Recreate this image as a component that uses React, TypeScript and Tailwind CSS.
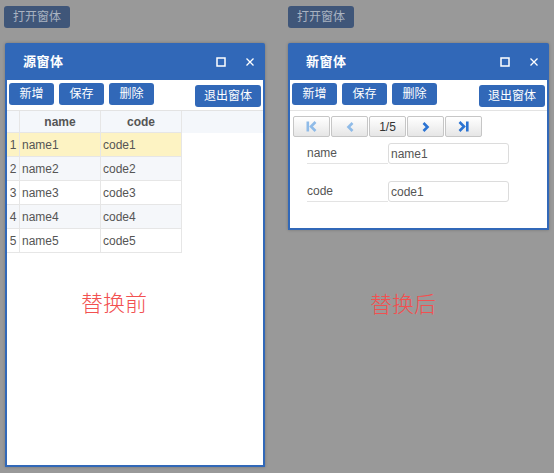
import type { ReactNode } from 'react'

const rows = [1, 2, 3, 4, 5]

function ToolBtn({ children, w = 'w-[45px]' }: { children: ReactNode; w?: string }) {
  return (
    <button className={`${w} h-[22px] rounded-[3px] bg-[#3168b8] text-white text-[12px] leading-[22px] text-center`}>
      {children}
    </button>
  )
}

function Toolbar() {
  return (
    <div className="h-[31px] flex items-start pt-[3px] px-[2px] border-b border-[#e3e3e3]">
      <div className="flex gap-[5px]">
        <ToolBtn>新增</ToolBtn>
        <ToolBtn>保存</ToolBtn>
        <ToolBtn>删除</ToolBtn>
      </div>
      <div className="ml-auto">
        <ToolBtn w="w-[66px]">退出窗体</ToolBtn>
      </div>
    </div>
  )
}

function WinHeader({ title }: { title: string }) {
  return (
    <div className="h-[37px] flex items-center pl-[16px] pr-[8px] text-white">
      <span className="text-[13px] font-bold tracking-[0.5px]">{title}</span>
      <div className="ml-auto flex items-center gap-[19px]">
        <svg width="10" height="10" viewBox="0 0 10 10">
          <rect x="1" y="1" width="8" height="8" fill="none" stroke="white" strokeWidth="1.5" />
        </svg>
        <svg width="10" height="10" viewBox="0 0 10 10">
          <path d="M1.5 1.5 L8.5 8.5 M8.5 1.5 L1.5 8.5" stroke="white" strokeWidth="1.3" />
        </svg>
      </div>
    </div>
  )
}

function OpenBtn() {
  return (
    <button className="w-[66px] h-[22px] rounded-[3px] bg-[#3f5679] text-[#aab3c1] text-[12px] leading-[22px] text-center">
      打开窗体
    </button>
  )
}

function PagerBtn({ children }: { children: ReactNode }) {
  return (
    <div className="w-[37px] h-[21px] rounded-[2px] border border-[#c6c6c6] bg-gradient-to-b from-[#ffffff] to-[#e6e6e6] flex items-center justify-center text-[12px] text-[#333]">
      {children}
    </div>
  )
}

export default function App() {
  return (
    <div
      className="w-[554px] h-[473px] bg-[#999999] flex overflow-hidden"
      style={{ fontFamily: '"Liberation Sans", Arial, "Noto Sans CJK SC", sans-serif' }}
    >
      {/* left column */}
      <div className="w-[288px] pl-[4px] pt-[6px] flex flex-col">
        <OpenBtn />
        <div className="mt-[15px] ml-[1px] w-[260px] h-[424px] bg-[#3168b8] rounded-t-[2px] flex flex-col px-[2px] pb-[2px] shadow-[0_0_3px_rgba(0,0,0,0.25)]">
          <WinHeader title="源窗体" />
          <div className="flex-1 bg-white flex flex-col">
            <Toolbar />
            <div className="grid grid-cols-[13px_81px_81px_1fr] text-[12px] text-[#555]">
              <div className="h-[22px] bg-[#f4f7fb] border-r border-b border-[#e6e6e6]" />
              <div className="h-[22px] bg-[#f4f7fb] border-r border-b border-[#e6e6e6] font-bold flex items-center justify-center">name</div>
              <div className="h-[22px] bg-[#f4f7fb] border-r border-b border-[#e6e6e6] font-bold flex items-center justify-center">code</div>
              <div className="h-[22px] bg-[#f4f7fb]" />
              {rows.map((r) => {
                const bg = r === 1 ? 'bg-[#fdf3c3]' : r % 2 === 0 ? 'bg-[#f5f7fa]' : 'bg-white'
                return [
                  <div key={`n${r}`} className={`h-[24px] border-r border-b border-[#e6e6e6] flex items-center justify-center ${bg}`}>{r}</div>,
                  <div key={`a${r}`} className={`h-[24px] border-r border-b border-[#e6e6e6] flex items-center pl-[2px] ${bg}`}>name{r}</div>,
                  <div key={`c${r}`} className={`h-[24px] border-r border-b border-[#e6e6e6] flex items-center pl-[2px] ${bg}`}>code{r}</div>,
                  <div key={`f${r}`} className="h-[24px]" />,
                ]
              })}
            </div>
            <div
              className="mt-[36px] ml-[74px] text-[22px] leading-[24px] text-[#f25050]"
              style={{ fontFamily: '"Noto Sans CJK SC", sans-serif', fontWeight: 300 }}
            >
              替换前
            </div>
          </div>
        </div>
      </div>

      {/* right column */}
      <div className="flex-1 pt-[6px] flex flex-col">
        <OpenBtn />
        <div className="mt-[15px] w-[261px] h-[187px] bg-[#3168b8] rounded-t-[2px] flex flex-col px-[2px] pb-[2px] shadow-[0_0_3px_rgba(0,0,0,0.25)]">
          <WinHeader title="新窗体" />
          <div className="flex-1 bg-white flex flex-col">
            <Toolbar />
            <div className="mt-[5px] ml-[3px] flex gap-[1px]">
              <PagerBtn>
                <svg width="13" height="13" viewBox="0 0 13 13">
                  <rect x="1.5" y="1.5" width="2.6" height="10" fill="#8fbbe8" />
                  <path d="M10.5 2 L6 6.5 L10.5 11" fill="none" stroke="#8fbbe8" strokeWidth="2.6" />
                </svg>
              </PagerBtn>
              <PagerBtn>
                <svg width="12" height="12" viewBox="0 0 12 12">
                  <path d="M8.5 2 L4.5 6 L8.5 10" fill="none" stroke="#8fbbe8" strokeWidth="2.6" />
                </svg>
              </PagerBtn>
              <PagerBtn>1/5</PagerBtn>
              <PagerBtn>
                <svg width="12" height="12" viewBox="0 0 12 12">
                  <path d="M3.5 2 L7.5 6 L3.5 10" fill="none" stroke="#2b73d2" strokeWidth="2.6" />
                </svg>
              </PagerBtn>
              <PagerBtn>
                <svg width="13" height="13" viewBox="0 0 13 13">
                  <path d="M2.5 2 L7 6.5 L2.5 11" fill="none" stroke="#2b73d2" strokeWidth="2.6" />
                  <rect x="9" y="1.5" width="2.6" height="10" fill="#2b73d2" />
                </svg>
              </PagerBtn>
            </div>
            <div className="mt-[6px] pl-[17px] flex flex-col gap-[17px] text-[12px] text-[#555]">
              {[
                ['name', 'name1'],
                ['code', 'code1'],
              ].map(([label, value]) => (
                <div key={label} className="flex">
                  <div className="w-[81px] h-[21px] border-b border-[#e3e3e3] flex items-center">{label}</div>
                  <div className="w-[121px] h-[21px] rounded-[3px] border border-[#dcdcdc] flex items-center pl-[2px]">{value}</div>
                </div>
              ))}
            </div>
          </div>
        </div>
        <div
          className="mt-[60px] ml-[82px] text-[22px] leading-[24px] text-[#f25050]"
          style={{ fontFamily: '"Noto Sans CJK SC", sans-serif', fontWeight: 300 }}
        >
          替换后
        </div>
      </div>
    </div>
  )
}
